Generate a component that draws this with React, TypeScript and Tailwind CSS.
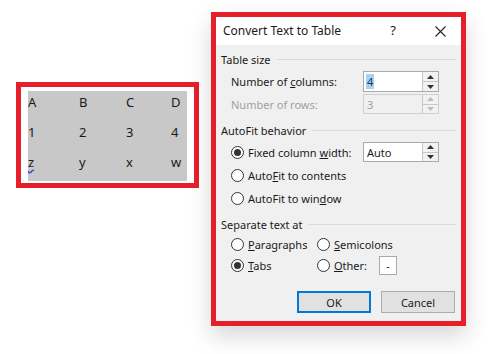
import React from "react";

const font = { fontFamily: '"Noto Sans", "Open Sans", sans-serif' };

function Spinner({ disabled = false }: { disabled?: boolean }) {
  const c = disabled ? "#bdbdbd" : "#333333";
  return (
    <div className="flex h-full w-[16px] flex-col border-l border-[#c8c8c8]">
      <div className="flex flex-1 items-center justify-center border-b border-[#c8c8c8] bg-[#f2f2f2]">
        <svg width="7" height="4" viewBox="0 0 7 4">
          <path d="M0 4 L3.5 0 L7 4 Z" fill={c} />
        </svg>
      </div>
      <div className="flex flex-1 items-center justify-center bg-[#f2f2f2]">
        <svg width="7" height="4" viewBox="0 0 7 4">
          <path d="M0 0 L3.5 4 L7 0 Z" fill={c} />
        </svg>
      </div>
    </div>
  );
}

function Radio({ checked = false }: { checked?: boolean }) {
  return (
    <span className="flex h-[13px] w-[13px] shrink-0 items-center justify-center rounded-full border border-[#333333] bg-white">
      {checked && <span className="h-[7px] w-[7px] rounded-full bg-[#333333]" />}
    </span>
  );
}

function GroupHeader({ title, className = "" }: { title: string; className?: string }) {
  return (
    <div className={`flex h-[20px] items-center gap-[6px] ${className}`}>
      <span className="whitespace-nowrap">{title}</span>
      <div className="h-px flex-1 bg-[#dadada]" />
    </div>
  );
}

export default function App() {
  const rows = [
    ["A", "B", "C", "D"],
    ["1", "2", "3", "4"],
    ["z", "y", "x", "w"],
  ];
  const widths = ["w-[51px]", "w-[47px]", "w-[45px]", "w-[16px]"];

  return (
    <div className="flex h-[354px] w-[502px] items-start bg-white pl-[16px] text-[#1a1a1a]" style={font}>
      <div className="mt-[82px] h-[106px] w-[183px] border-[5px] border-[#e5202b] bg-white pl-[7px] pt-[4px]">
        <div className="w-[159px] bg-[#c8c8c8] text-[13px]">
          {rows.map((row, r) => (
            <div key={r} className="flex h-[30px] items-start pt-[1px] leading-[20px]">
              {row.map((cell, i) => (
                <span key={i} className={widths[i]}>
                  {cell === "z" ? (
                    <span className="underline decoration-[#3b3bd0] decoration-wavy underline-offset-2">z</span>
                  ) : (
                    cell
                  )}
                </span>
              ))}
            </div>
          ))}
        </div>
      </div>

      <div className="ml-[12px] mt-[12px] flex h-[314px] w-[255px] flex-col border-[5px] border-[#e5202b] shadow-[0_10px_22px_rgba(0,0,0,0.16)]">
        <div className="flex h-[28px] items-center bg-white pl-[7px] text-[12px]">
          <span>Convert Text to Table</span>
          <span className="ml-auto mr-[39px] text-[13px]">?</span>
          <svg width="11" height="11" viewBox="0 0 11 11" className="mr-[15px]">
            <path d="M0.5 0.5 L10.5 10.5 M10.5 0.5 L0.5 10.5" stroke="#222" strokeWidth="1.1" />
          </svg>
        </div>

        <div className="flex flex-1 flex-col bg-[#f0f0f0] px-[5px] text-[11px] leading-none">
          <GroupHeader title="Table size" className="mt-[4px]" />
          <div className="mt-[2px] flex h-[21px] items-center pl-[10px]">
            <span>
              Number of <span className="underline">c</span>olumns:
            </span>
            <div className="ml-auto mr-[17px] flex h-full w-[76px] border border-[#a9a9a9] bg-white">
              <div className="flex flex-1 items-center pl-[2px]">
                <span className="bg-[#a8d1f2] px-px leading-[15px] text-[#1a3a5a]">4</span>
              </div>
              <Spinner />
            </div>
          </div>
          <div className="mt-[2px] flex h-[20px] items-center pl-[10px] text-[#a0a0a0]">
            <span>Number of rows:</span>
            <div className="ml-auto mr-[17px] flex h-full w-[76px] border border-[#cfcfcf] bg-[#f0f0f0]">
              <div className="flex flex-1 items-center pl-[3px]">3</div>
              <Spinner disabled />
            </div>
          </div>

          <GroupHeader title="AutoFit behavior" className="mt-[6px]" />
          <div className="mt-[2px] flex h-[20px] items-center pl-[10px]">
            <Radio checked />
            <span className="ml-[4px]">
              Fixed column <span className="underline">w</span>idth:
            </span>
            <div className="ml-auto mr-[17px] flex h-full w-[76px] border border-[#a9a9a9] bg-white">
              <div className="flex flex-1 items-center pl-[3px]">Auto</div>
              <Spinner />
            </div>
          </div>
          <div className="mt-[3px] flex h-[20px] items-center pl-[10px]">
            <Radio />
            <span className="ml-[4px]">
              Auto<span className="underline">F</span>it to contents
            </span>
          </div>
          <div className="mt-[3px] flex h-[20px] items-center pl-[10px]">
            <Radio />
            <span className="ml-[4px]">
              AutoFit to win<span className="underline">d</span>ow
            </span>
          </div>

          <GroupHeader title="Separate text at" className="mt-[6px]" />
          <div className="flex h-[20px] items-center pl-[10px]">
            <div className="flex w-[86px] items-center">
              <Radio />
              <span className="ml-[4px]">
                <span className="underline">P</span>aragraphs
              </span>
            </div>
            <Radio />
            <span className="ml-[4px]">
              <span className="underline">S</span>emicolons
            </span>
          </div>
          <div className="mt-[1px] flex h-[20px] items-center pl-[10px]">
            <div className="flex w-[86px] items-center">
              <Radio checked />
              <span className="ml-[4px]">
                <span className="underline">T</span>abs
              </span>
            </div>
            <Radio />
            <span className="ml-[4px] w-[45px]">
              <span className="underline">O</span>ther:
            </span>
            <div className="flex h-[19px] w-[18px] items-center justify-center border border-[#a9a9a9] bg-white">
              -
            </div>
          </div>

          <div className="mt-[16px] flex justify-end gap-[10px] pr-[1px]">
            <button className="flex h-[22px] w-[74px] items-center justify-center border-2 border-[#0078d7] bg-[#e1e1e1]">
              OK
            </button>
            <button className="flex h-[22px] w-[74px] items-center justify-center border border-[#adadad] bg-[#e1e1e1]">
              Cancel
            </button>
          </div>
        </div>
      </div>
    </div>
  );
}
